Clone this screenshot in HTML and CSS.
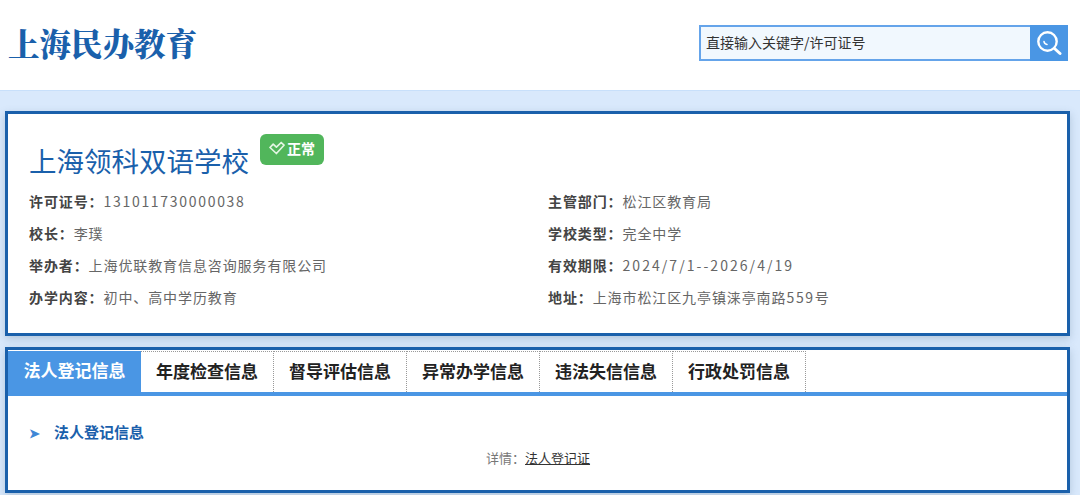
FILE: index.html
```html
<!DOCTYPE html>
<html lang="zh-CN">
<head>
<meta charset="utf-8">
<title>上海民办教育</title>
<link rel="stylesheet" href="styles.css">
</head>
<body>
<header class="top">
  <div class="logo">上海民办教育</div>
  <form class="search">
    <div class="search-input">直接输入关键字/许可证号</div>
    <div class="search-btn">
      <svg width="26" height="26" viewBox="0 0 26 26" fill="none" stroke="#fff" stroke-linecap="round">
        <circle cx="11.5" cy="11.5" r="9.2" stroke-width="2.4"/>
        <path d="M18.5 18.5L24 23.5" stroke-width="3"/>
        <path d="M8 11.5a3.5 3.5 0 0 0 3 3" stroke-width="1.6"/>
      </svg>
    </div>
  </form>
</header>
<main class="content">
  <section class="card info">
    <div class="title-row">
      <h1 class="school">上海领科双语学校</h1>
      <span class="badge">
        <svg width="16" height="14" viewBox="0 0 16 14" fill="none" stroke="#e3f5e3" stroke-width="1.7" stroke-linejoin="round"><path d="M1 6.5L4.2 3.2L7.4 6.2L12.2 1.5L15 4.2L7.4 12.5Z"/></svg>
        正常
      </span>
    </div>
    <div class="fields">
      <div class="col col-left">
        <p class="field"><b>许可证号：</b><span class="num">131011730000038</span></p>
        <p class="field"><b>校长：</b>李璞</p>
        <p class="field"><b>举办者：</b>上海优联教育信息咨询服务有限公司</p>
        <p class="field"><b>办学内容：</b>初中、高中学历教育</p>
      </div>
      <div class="col">
        <p class="field"><b>主管部门：</b>松江区教育局</p>
        <p class="field"><b>学校类型：</b>完全中学</p>
        <p class="field"><b>有效期限：</b><span class="date">2024/7/1--2026/4/19</span></p>
        <p class="field"><b>地址：</b>上海市松江区九亭镇涞亭南路<span class="num">559</span>号</p>
      </div>
    </div>
  </section>
  <section class="card detail">
    <nav class="tabs">
      <a class="tab active">法人登记信息</a>
      <a class="tab">年度检查信息</a>
      <a class="tab">督导评估信息</a>
      <a class="tab">异常办学信息</a>
      <a class="tab">违法失信信息</a>
      <a class="tab">行政处罚信息</a>
    </nav>
    <div class="panel">
      <h2 class="panel-title"><span class="arrow">➤</span>法人登记信息</h2>
      <p class="panel-line">详情：<a class="panel-link">法人登记证</a></p>
    </div>
  </section>
</main>
</body>
</html>
```
FILE: styles.css
```css
* { box-sizing: border-box; }
html, body { margin: 0; padding: 0; }
body {
  width: 1080px;
  height: 495px;
  overflow: hidden;
  background: #d9e9fc;
  font-family: "Noto Sans CJK SC", "Liberation Sans", sans-serif;
}
.top {
  height: 91px;
  background: #fff;
  border-bottom: 1px solid #c8e0fb;
  display: flex;
  justify-content: space-between;
  padding: 25px 12px 0 8px;
}
.logo {
  font-family: "Noto Serif CJK SC", "Noto Sans CJK SC", serif;
  font-weight: 900;
  font-size: 31.5px;
  line-height: 36px;
  color: #1a60ab;
  height: 36px;
}
.search {
  display: flex;
  width: 369px;
  height: 36px;
  margin: 0;
}
.search-input {
  flex: 1;
  background: #f1f8fe;
  border: 2px solid #65a4ea;
  border-right: 0;
  font-size: 14px;
  line-height: 30px;
  padding-left: 5px;
  color: #333;
}
.search-btn {
  width: 38px;
  background: #4a96e4;
  display: flex;
  align-items: center;
  justify-content: center;
}
.content {
  padding: 20px 10px 0 5px;
}
.card {
  background: #fff;
  border: 3px solid #1a60ab;
  box-shadow: 0 3px 8px rgba(60, 90, 120, 0.25);
}
.info {
  height: 225px;
  padding: 20px 21px 0;
}
.title-row {
  display: flex;
  align-items: flex-start;
  height: 45px;
}
.school {
  margin: 6px 0 0;
  font-size: 27.5px;
  line-height: 40px;
  font-weight: 400;
  color: #1a60ab;
  white-space: nowrap;
}
.badge {
  margin-left: 11px;
  width: 64px;
  height: 31px;
  padding-bottom: 3px;
  border-radius: 6px;
  background: #51b65b;
  color: #fff;
  font-size: 14px;
  font-weight: 700;
  display: flex;
  align-items: center;
  justify-content: center;
  gap: 2px;
}
.fields {
  display: flex;
  margin-top: 6px;
}
.col-left { width: 519px; }
.field {
  margin: 0;
  height: 32px;
  font-size: 14px;
  line-height: 32px;
  letter-spacing: 0.9px;
  color: #666;
  white-space: nowrap;
}
.field b {
  color: #444;
  font-weight: 700;
}
.num { letter-spacing: 1.7px; }
.date { letter-spacing: 2.05px; }
.detail {
  margin-top: 11px;
  height: 146px;
}
.tabs {
  display: flex;
  height: 45px;
  margin-top: 1px;
  border-bottom: 4px solid #4a96e4;
}
.tab {
  width: 133px;
  text-align: center;
  font-size: 17px;
  font-weight: 700;
  line-height: 38px;
  color: #222;
  border-top: 1px dotted #999;
  border-right: 1px dotted #999;
}
.tab.active {
  background: #4a96e4;
  color: #fff;
  border: 0;
}
.panel { padding: 24px 0 0 21px; }
.panel-title {
  margin: 0;
  font-size: 15px;
  line-height: 24px;
  font-weight: 700;
  color: #1a60ab;
}
.arrow {
  display: inline-block;
  width: 25px;
  font-size: 13px;
  color: #3f87d6;
}
.panel-line {
  margin: 3px 0 0;
  padding-left: 457px;
  font-size: 13px;
  line-height: 20px;
  color: #777;
}
.panel-link {
  color: #333;
  text-decoration: underline;
}
```
